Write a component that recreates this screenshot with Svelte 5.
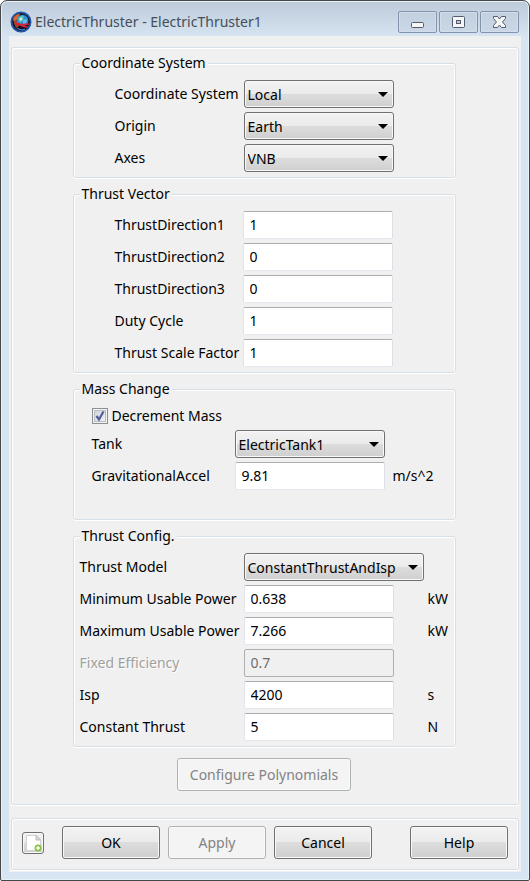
<script>
  const frames = ['Local', 'Inertial'];
  const origins = ['Earth', 'Luna', 'Sun'];
  const axes = ['VNB', 'LVLH', 'MJ2000Eq', 'SpacecraftBody'];
  const tanks = ['ElectricTank1'];
  const models = ['ConstantThrustAndIsp', 'FixedEfficiency', 'ThrustMassPolynomial'];

  const coordinateRows = [
    { id: 'system', label: 'Coordinate System', options: frames },
    { id: 'origin', label: 'Origin', options: origins },
    { id: 'axes', label: 'Axes', options: axes }
  ];

  let vectorRows = $state([
    { id: 'dir1', label: 'ThrustDirection1', value: '1' },
    { id: 'dir2', label: 'ThrustDirection2', value: '0' },
    { id: 'dir3', label: 'ThrustDirection3', value: '0' },
    { id: 'duty', label: 'Duty Cycle', value: '1' },
    { id: 'scale', label: 'Thrust Scale Factor', value: '1' }
  ]);

  let configRows = $state([
    { id: 'minpower', label: 'Minimum Usable Power', value: '0.638', unit: 'kW', disabled: false },
    { id: 'maxpower', label: 'Maximum Usable Power', value: '7.266', unit: 'kW', disabled: false },
    { id: 'efficiency', label: 'Fixed Efficiency', value: '0.7', unit: '', disabled: true },
    { id: 'isp', label: 'Isp', value: '4200', unit: 's', disabled: false },
    { id: 'thrust', label: 'Constant Thrust', value: '5', unit: 'N', disabled: false }
  ]);

  let decrement = $state(true);
  let gravity = $state('9.81');
</script>

{#snippet dropdown(id, options)}
  <span class="select">
    <select {id}>
      {#each options as option}
        <option>{option}</option>
      {/each}
    </select>
  </span>
{/snippet}

<div class="window">
  <header>
    <svg class="logo" viewBox="0 0 22 22" aria-hidden="true">
      <circle cx="11" cy="11" r="9.6" fill="#14131c" stroke="#2456a8" stroke-width="1.8" />
      <path d="M3 8 Q5 3 10 3 L8 8 L4 11 Z" fill="#e0662f" />
      <path d="M3.5 11 L8 9 L9 15 L6 17 Z" fill="#a8442d" />
      <circle cx="12.5" cy="9.5" r="5.8" fill="#2c8fdb" />
      <path d="M8 8 Q10 4 14 5 L13 9 L10 12 Z" fill="#5cc4a0" />
      <path d="M13 9 L17 8 L16 13 L13 13 Z" fill="#62bdf0" />
      <circle cx="11" cy="8" r="1.5" fill="#c9f0e4" />
      <path d="M6 13 Q10 14 19 13 M8 12 Q12 16 18 16" fill="none" stroke="#d91f35" stroke-width="1.5" />
      <path d="M7 17 Q11 20 15 18" fill="none" stroke="#3a78c8" stroke-width="1.2" />
    </svg>
    <h1>ElectricThruster - ElectricThruster1</h1>
    <div class="caption">
      <button aria-label="Minimize">
        <svg viewBox="0 0 37 20"><rect x="12.5" y="10.5" width="12" height="5" rx="1" fill="#f6f6f6" stroke="#545b6d" /></svg>
      </button>
      <button aria-label="Maximize">
        <svg viewBox="0 0 37 20">
          <rect x="12.5" y="4.5" width="12" height="11" rx="1" fill="#f6f6f6" stroke="#545b6d" />
          <rect x="16.5" y="8.5" width="4" height="3" fill="#b9c8da" stroke="#545b6d" />
        </svg>
      </button>
      <button aria-label="Close">
        <svg viewBox="0 0 37 20">
          <path d="M12.5 4.5 H16.5 L18.5 7 L20.5 4.5 H24.5 V6.5 L21.5 10 L24.5 13.5 V15.5 H20.5 L18.5 13 L16.5 15.5 H12.5 V13.5 L15.5 10 L12.5 6.5 Z" fill="#f6f6f6" stroke="#545b6d" stroke-linejoin="round" />
        </svg>
      </button>
    </div>
  </header>

  <div class="client">
    <main class="panel">
      <fieldset>
        <legend>Coordinate System</legend>
        <div class="rows indented choices">
          {#each coordinateRows as row}
            <div class="row">
              <label for={row.id}>{row.label}</label>
              {@render dropdown(row.id, row.options)}
            </div>
          {/each}
        </div>
      </fieldset>

      <fieldset>
        <legend>Thrust Vector</legend>
        <div class="rows indented">
          {#each vectorRows as row}
            <div class="row">
              <label for={row.id}>{row.label}</label>
              <input id={row.id} type="text" bind:value={row.value} />
            </div>
          {/each}
        </div>
      </fieldset>

      <fieldset>
        <legend>Mass Change</legend>
        <div class="rows mass">
          <label class="check">
            <input type="checkbox" bind:checked={decrement} />
            <svg class="tick" viewBox="0 0 16 16" aria-hidden="true"><path d="M4.5 8 L7 11.5 L11.5 3.5" /></svg>
            Decrement Mass
          </label>
          <div class="row">
            <label for="tank">Tank</label>
            {@render dropdown('tank', tanks)}
          </div>
          <div class="row">
            <label for="gravity">GravitationalAccel</label>
            <input id="gravity" type="text" bind:value={gravity} />
            <span class="unit">m/s^2</span>
          </div>
        </div>
      </fieldset>

      <fieldset>
        <legend>Thrust Config.</legend>
        <div class="rows config">
          <div class="row wide">
            <label for="model">Thrust Model</label>
            {@render dropdown('model', models)}
          </div>
          {#each configRows as row}
            <div class="row">
              <label for={row.id} class:off={row.disabled}>{row.label}</label>
              <input id={row.id} type="text" bind:value={row.value} disabled={row.disabled} />
              <span class="unit">{row.unit}</span>
            </div>
          {/each}
        </div>
      </fieldset>

      <button class="push configure" disabled>Configure Polynomials</button>
    </main>

    <footer class="panel">
      <button class="push script" aria-label="Show script">
        <svg viewBox="0 0 20 20">
          <path d="M3.5 2.5 H13 L17.5 7 V17.5 H3.5 Z" fill="#fff" stroke="#d3d3d3" />
          <path d="M13 2.5 V7 H17.5 Z" fill="#e4e4e4" stroke="#a9a9a9" stroke-width=".8" />
          <circle cx="15" cy="15" r="3.5" fill="#83c341" />
          <path d="M15 13 V17 M13 15 H17" stroke="#fff" stroke-width="1.3" />
        </svg>
      </button>
      <button class="push">OK</button>
      <button class="push" disabled>Apply</button>
      <button class="push">Cancel</button>
      <button class="push help">Help</button>
    </footer>
  </div>
</div>

<style>
  :global(body) {
    margin: 0;
    background: #fff;
  }

  .window,
  .window * {
    box-sizing: border-box;
  }

  .window {
    display: flex;
    flex-direction: column;
    min-height: 100vh;
    padding: 0 8px 8px;
    border: 1px solid #45474b;
    border-radius: 7px 7px 2px 2px;
    background: linear-gradient(#bccada, #d7e4f1 36px);
    box-shadow: inset 0 0 0 1px #e9f1f8;
    color: #000;
    font: 14px/20px "Noto Sans", "Open Sans", sans-serif;
  }

  button,
  input,
  select {
    margin: 0;
    font: inherit;
    color: inherit;
  }

  header {
    display: flex;
    align-items: center;
    height: 35px;
    padding: 8px 2px 2px 1px;
  }

  .logo {
    width: 22px;
    height: 22px;
    margin-right: 3px;
  }

  h1 {
    flex: 1;
    margin: 0;
    color: #454e58;
    font-size: 14px;
    font-weight: 400;
    white-space: nowrap;
  }

  .caption {
    display: flex;
    gap: 2px;
  }

  .caption button {
    width: 39px;
    height: 22px;
    padding: 0;
    border: 1px solid #8392ae;
    border-radius: 2px;
    background: linear-gradient(#c3d0df, #c9d7e6);
    box-shadow: inset 0 0 0 1px #d3deea;
  }

  .caption svg {
    display: block;
    width: 37px;
    height: 20px;
  }

  .client {
    display: flex;
    flex: 1;
    flex-direction: column;
    gap: 13px;
    padding: 11px 2px 2px;
    background: #f0f0f0;
  }

  .panel,
  fieldset {
    border: 1px solid #d5dfe5;
    border-radius: 3px;
    box-shadow: inset 1px 1px 0 #fff, inset -1px 0 0 #fff, 0 1px 0 #fff;
  }

  main {
    display: flex;
    flex: 1;
    flex-direction: column;
    align-items: center;
    gap: 6px;
    padding: 5px 12px 13px 10px;
  }

  fieldset {
    width: 100%;
    max-width: 383px;
    min-width: 0;
    margin: 0;
    padding: 7px 6px 5px;
  }

  legend {
    height: 20px;
    padding: 0 2px;
    background: #f0f0f0;
  }

  .rows {
    display: flex;
    flex-direction: column;
    gap: 4px;
  }

  .row {
    display: grid;
    grid-template-columns: 164px 150px 1fr;
    align-items: center;
    height: 28px;
    white-space: nowrap;
  }

  .indented {
    padding-left: 35px;
  }

  .indented .row {
    grid-template-columns: 128px 150px;
  }

  .choices .row {
    grid-template-columns: 129px 150px;
  }

  .mass {
    padding: 0 0 24px 12px;
  }

  .mass .row {
    grid-template-columns: 143px 150px 1fr;
  }

  .mass .unit {
    padding-left: 8px;
  }

  .config .unit {
    padding-left: 34px;
  }

  .config .wide {
    grid-template-columns: 164px 180px;
  }

  .select {
    position: relative;
    display: block;
    height: 28px;
  }

  .select::after {
    content: "";
    position: absolute;
    top: 12px;
    right: 6px;
    border: 5px solid transparent;
    border-top-color: #000;
    border-bottom: 0;
    pointer-events: none;
  }

  select,
  .push {
    border: 1px solid #707070;
    border-radius: 3px;
    background: linear-gradient(#f2f2f2, #ebebeb 48%, #dddddd 50%, #cfcfcf);
    box-shadow: inset 0 0 0 1px #f9f9f9;
  }

  select {
    display: block;
    width: 100%;
    height: 28px;
    padding: 2px 20px 0 3px;
    appearance: none;
  }

  input[type="text"] {
    width: 100%;
    height: 28px;
    padding: 0 6px 2px;
    border: 1px solid;
    border-color: #abadb3 #dbdfe6 #e3e9ef #e2e3ea;
    border-radius: 2px;
    background: #fff;
  }

  input[type="text"]:disabled {
    border-color: #afafaf;
    background: #f0f0f0;
    color: #6d6d6d;
  }

  .off {
    color: #a0a0a0;
    text-shadow: 1px 1px 0 #fff;
  }

  .check {
    position: relative;
    display: flex;
    align-items: center;
    gap: 4px;
    height: 20px;
  }

  .check input {
    width: 16px;
    height: 16px;
    border: 1px solid #8e8f8f;
    background: linear-gradient(135deg, #cbcfd5, #f6f6f6);
    box-shadow: inset 0 0 0 1px #f4f4f4, inset 0 0 0 2px #b8bec6;
    appearance: none;
  }

  .tick {
    position: absolute;
    left: 0;
    width: 16px;
    height: 16px;
    fill: none;
    stroke: #4b5f9b;
    stroke-width: 2.2;
    pointer-events: none;
  }

  .check input:not(:checked) + .tick {
    display: none;
  }

  .push {
    width: 98px;
    height: 33px;
    padding: 0;
  }

  .push:disabled {
    border-color: #adb2b5;
    background: #f4f4f4;
    color: #838383;
  }

  .configure {
    width: 174px;
    margin-top: 5px;
  }

  footer {
    display: flex;
    align-items: center;
    gap: 8px;
    height: 52px;
    padding: 0 10px 3px;
  }

  footer .script {
    width: 22px;
    height: 22px;
    margin-right: 10px;
  }

  .script svg {
    display: block;
    width: 20px;
    height: 20px;
  }

  .help {
    margin-left: auto;
  }
</style>
